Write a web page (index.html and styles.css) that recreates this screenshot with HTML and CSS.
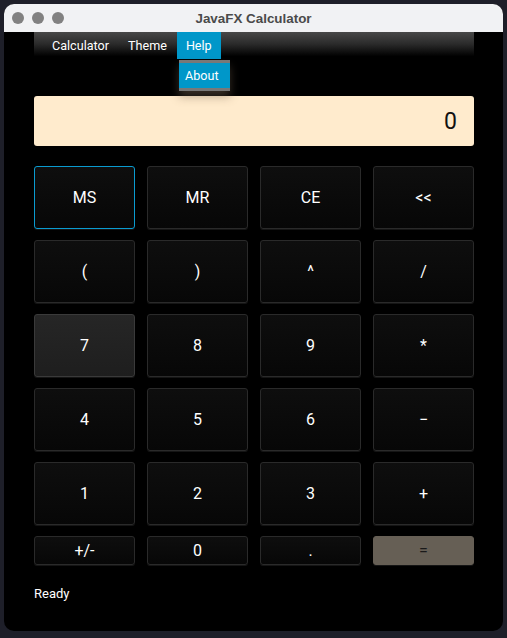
FILE: index.html
```html
<!DOCTYPE html>
<html>
<head>
<meta charset="utf-8">
<link rel="stylesheet" href="styles.css">
</head>
<body>
<div class="window">
  <div class="titlebar">
    <div class="lights"><span class="light"></span><span class="light"></span><span class="light"></span></div>
    <div class="title">JavaFX Calculator</div>
  </div>
  <div class="content">
    <div class="menubar">
      <div class="menu">Calculator</div>
      <div class="menu">Theme</div>
      <div class="menu active">Help</div>
    </div>
    <div class="dropdown"><div class="dropitem">About</div></div>
    <div class="display">0</div>
    <div class="keys">
      <button class="key focus">MS</button>
      <button class="key">MR</button>
      <button class="key">CE</button>
      <button class="key">&lt;&lt;</button>
      <button class="key">(</button>
      <button class="key">)</button>
      <button class="key">^</button>
      <button class="key">/</button>
      <button class="key hover">7</button>
      <button class="key">8</button>
      <button class="key">9</button>
      <button class="key">*</button>
      <button class="key">4</button>
      <button class="key">5</button>
      <button class="key">6</button>
      <button class="key">−</button>
      <button class="key">1</button>
      <button class="key">2</button>
      <button class="key">3</button>
      <button class="key">+</button>
      <button class="key">+/-</button>
      <button class="key">0</button>
      <button class="key">.</button>
      <button class="key equals">=</button>
    </div>
    <div class="status">Ready</div>
  </div>
</div>
</body>
</html>
```
FILE: styles.css
```css
html, body {
  margin: 0;
  padding: 0;
  background: #1e1f29;
  width: 507px;
  height: 638px;
  overflow: hidden;
}
body {
  font-family: Roboto, "Liberation Sans", sans-serif;
}
.window {
  position: relative;
  margin: 4px 0 0 4px;
  width: 499px;
  height: 627px;
  border-radius: 10px;
  background: #000;
  overflow: hidden;
}
.titlebar {
  height: 28px;
  background: #f1f2f4;
  display: flex;
  align-items: center;
  position: relative;
}
.lights {
  display: flex;
  gap: 8px;
  padding-left: 8px;
}
.light {
  width: 12px;
  height: 12px;
  border-radius: 50%;
  background: #818181;
}
.title {
  position: absolute;
  left: 0;
  right: 0;
  text-align: center;
  font-family: "Liberation Sans", Arial, sans-serif;
  font-weight: bold;
  font-size: 13.4px;
  color: #4a4a4a;
  top: 7px;
}
.content {
  position: relative;
  padding: 0 29px 0 30px;
}
.menubar {
  height: 27px;
  display: flex;
  gap: 1px;
  padding-left: 9px;
  background: linear-gradient(#484848 0%, #2a2a2a 45%, #000 90%);
}
.menu {
  padding: 0 9px;
  font-size: 12.6px;
  color: #fff;
  line-height: 27px;
}
.menu.active {
  background: #0097c9;
}
.dropdown {
  position: absolute;
  left: 175px;
  top: 28px;
  width: 51px;
  height: 25px;
  border-top: 3px solid #787878;
  border-bottom: 3px solid #787878;
  background: #0097c9;
  box-shadow: 0 6px 10px rgba(120, 100, 80, 0.45);
  z-index: 2;
}
.dropitem {
  padding-left: 6px;
  font-size: 12.6px;
  color: #fff;
  line-height: 25px;
}
.display {
  margin-top: 37px;
  height: 50px;
  background: #ffebcd;
  border-radius: 3px;
  text-align: right;
  padding-right: 17px;
  font-size: 23px;
  line-height: 52px;
  color: #111;
}
.keys {
  margin-top: 20px;
  display: grid;
  grid-template-columns: repeat(4, 101px);
  grid-template-rows: repeat(5, 63px) 29px;
  column-gap: 12px;
  row-gap: 11px;
}
.key {
  margin: 0;
  padding: 0;
  font-family: Roboto, "Liberation Sans", sans-serif;
  font-size: 16px;
  color: #fff;
  background: linear-gradient(#0e0e0e, #070707);
  border: 1px solid #2a2a2a;
  border-radius: 3px;
  box-shadow: 0 1px 0 #151515;
}
.key.focus {
  border-color: #0a9bd0;
}
.key.hover {
  background: linear-gradient(#262626, #1e1e1e);
  border-color: #3a3a3a;
}
.key.equals {
  background: #665f55;
  border-color: #665f55;
  color: #1a1a1a;
}
.status {
  margin-top: 21px;
  font-size: 13px;
  color: #fff;
}
```
